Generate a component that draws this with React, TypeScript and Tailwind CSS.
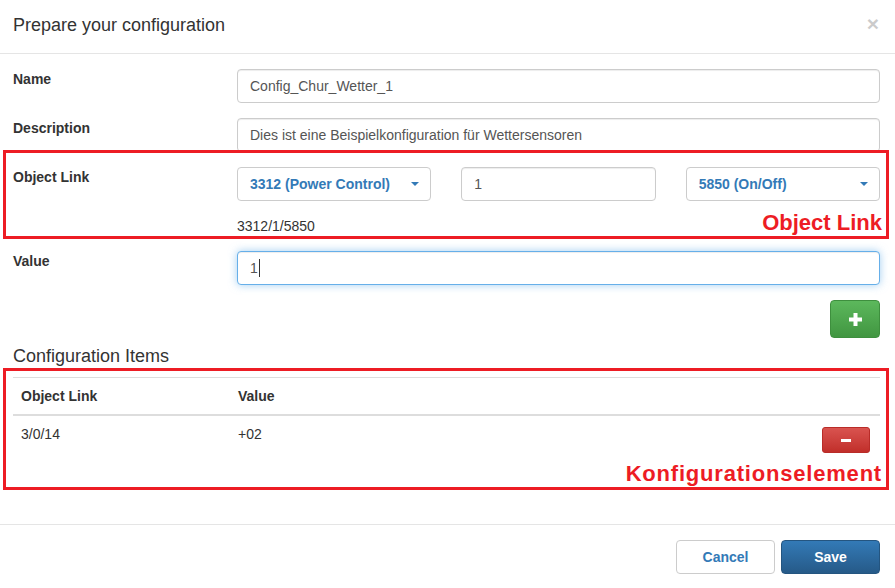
import React from "react";

const inputCls =
  "h-[34px] w-full rounded-[4px] border border-[#ccc] bg-white px-[12px] leading-[32px] text-[#555] shadow-[inset_0_1px_1px_rgba(0,0,0,0.075)]";

function Row({ label, children }: { label: string; children: React.ReactNode }) {
  return (
    <div className="flex">
      <div className="w-[224px] shrink-0 font-bold leading-[20px]">{label}</div>
      <div className="flex-1">{children}</div>
    </div>
  );
}

function SelectBox({ text }: { text: string }) {
  return (
    <div className="flex h-[34px] items-center justify-between rounded-[4px] border border-[#ccc] bg-white pl-[12px] pr-[11px] font-bold text-[#337ab7]">
      <span>{text}</span>
      <span className="h-0 w-0 border-x-[4px] border-t-[4px] border-x-transparent border-t-[#337ab7]" />
    </div>
  );
}

// red annotation frame drawn over the form
function Annotation({ label, className }: { label: string; className: string }) {
  return (
    <div className={`pointer-events-none absolute border-[3px] border-[#ed1c24] ${className}`}>
      <span className="absolute right-[4px] bottom-[1px] text-[22px] leading-[24px] font-bold text-[#ed1c24]">
        {label}
      </span>
    </div>
  );
}

export default function App() {
  return (
    <div className="h-[588px] w-[895px] overflow-hidden bg-white font-['Liberation_Sans',Arial,sans-serif] text-[14px] text-[#333]">
      {/* header */}
      <div className="flex h-[54px] items-start justify-between border-b border-[#e5e5e5] pt-[15px] pr-[16px] pl-[13px]">
        <h4 className="text-[18px] leading-[20px]">Prepare your configuration</h4>
        <button className="mt-[-3px] text-[21px] leading-[24px] font-bold text-black opacity-20">×</button>
      </div>

      {/* body */}
      <div className="flex h-[470px] flex-col pt-[15px] pr-[15px] pl-[13px]">
        <Row label="Name">
          <div className={inputCls}>Config_Chur_Wetter_1</div>
        </Row>
        <div className="mt-[15px]">
          <Row label="Description">
            <div className={inputCls}>Dies ist eine Beispielkonfiguration für Wettersensoren</div>
          </Row>
        </div>

        <div className="relative mt-[15px]">
          <Row label="Object Link">
            <div className="grid grid-cols-3 gap-[30px]">
              <SelectBox text="3312 (Power Control)" />
              <div className={inputCls}>1</div>
              <SelectBox text="5850 (On/Off)" />
            </div>
            <div className="mt-[15px] leading-[20px]">3312/1/5850</div>
          </Row>
          <Annotation label="Object Link" className="-top-[17px] -right-[9px] -bottom-[3px] -left-[10px]" />
        </div>

        <div className="mt-[15px]">
          <Row label="Value">
            <div className="flex h-[34px] w-full items-center rounded-[4px] border border-[#66afe9] bg-white px-[12px] text-[#555] shadow-[inset_0_1px_1px_rgba(0,0,0,0.075),0_0_8px_rgba(102,175,233,0.6)]">
              <span>1</span>
              <span className="ml-[1px] h-[18px] w-px bg-[#333]" />
            </div>
          </Row>
        </div>

        <div className="mt-[15px] flex justify-end">
          <button className="flex h-[38px] w-[50px] items-center justify-center rounded-[4px] border border-[#3e8f3e] bg-linear-to-b from-[#5cb85c] to-[#419641]">
            <svg width="13" height="13" viewBox="0 0 13 13">
              <rect x="4.5" y="0" width="4" height="13" fill="#fff" />
              <rect x="0" y="4.5" width="13" height="4" fill="#fff" />
            </svg>
          </button>
        </div>

        <h4 className="mt-[8px] text-[18px] leading-[20px]">Configuration Items</h4>

        <div className="relative mt-[11px] h-[110px]">
          <table className="w-full border-t border-[#ddd] text-left">
            <thead>
              <tr>
                <th className="w-[217px] border-b-2 border-[#ddd] px-[8px] py-[8px] leading-[20px] font-bold">Object Link</th>
                <th className="border-b-2 border-[#ddd] px-[8px] py-[8px] leading-[20px] font-bold">Value</th>
                <th className="border-b-2 border-[#ddd]" />
              </tr>
            </thead>
            <tbody>
              <tr>
                <td className="px-[8px] py-[8px] align-top leading-[20px]">3/0/14</td>
                <td className="px-[8px] py-[8px] align-top leading-[20px]">+02</td>
                <td className="py-[8px] pr-[10px] align-top">
                  <button className="mt-[3px] ml-auto flex h-[26px] w-[48px] items-center justify-center rounded-[3px] border border-[#b92c28] bg-linear-to-b from-[#d9534f] to-[#c12e2a]">
                    <span className="h-[3px] w-[10px] bg-white" />
                  </button>
                </td>
              </tr>
            </tbody>
          </table>
          <Annotation
            label="Konfigurationselement"
            className="-top-[9px] -right-[9px] -bottom-[3px] -left-[10px] [&>span]:tracking-[0.8px]"
          />
        </div>
      </div>

      {/* footer */}
      <div className="flex justify-end gap-[6px] border-t border-[#e5e5e5] pt-[15px] pr-[15px]">
        <button className="h-[34px] w-[99px] rounded-[4px] border border-[#ccc] bg-white font-bold text-[#337ab7]">
          Cancel
        </button>
        <button className="h-[34px] w-[99px] rounded-[4px] border border-[#245580] bg-linear-to-b from-[#337ab7] to-[#265a88] font-bold text-white">
          Save
        </button>
      </div>
    </div>
  );
}
